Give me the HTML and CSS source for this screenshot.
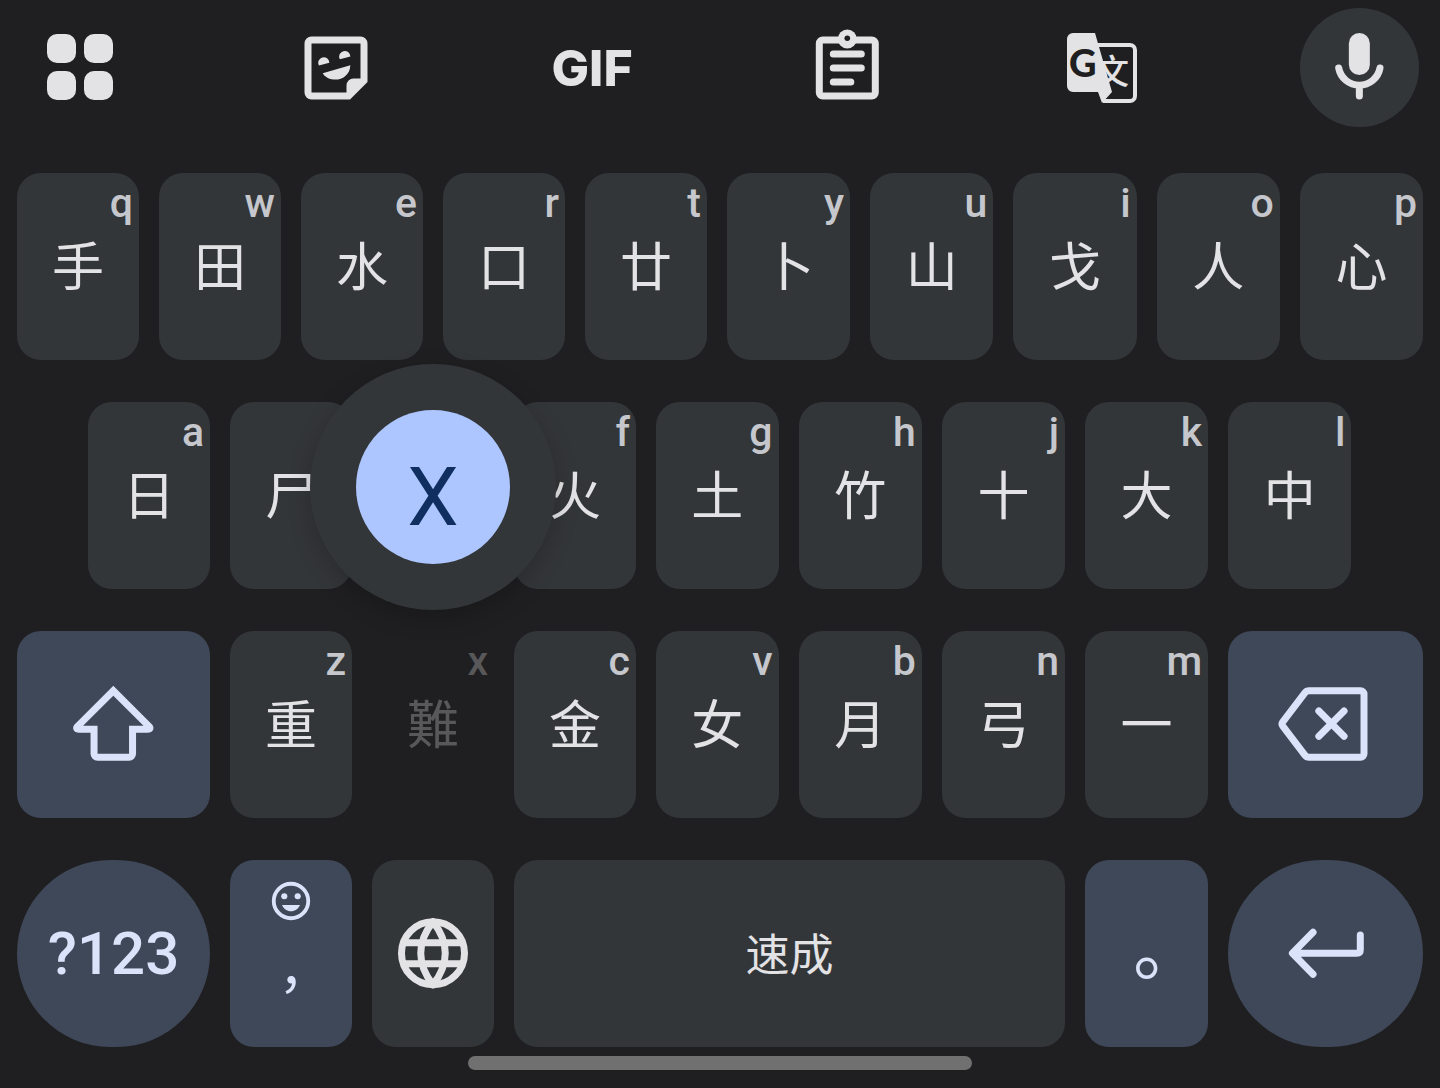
FILE: index.html
```
<!DOCTYPE html>
<html lang="zh-Hans">
<head>
    <meta charset="UTF-8">
    <meta name="viewport" content="width=device-width, initial-scale=1.0">
    <title>速成</title>
    <link rel="stylesheet" href="styles.css">
</head>
<body>

<div class="toolbar">
    <button class="tool" aria-label="Menu">
        <svg class="icon" viewBox="0 0 84 84">
            <rect x="8" y="8" width="29" height="29" rx="10"/>
            <rect x="45" y="8" width="29" height="29" rx="10"/>
            <rect x="8" y="45" width="29" height="29" rx="10"/>
            <rect x="45" y="45" width="29" height="29" rx="10"/>
        </svg>
    </button>
    <button class="tool" aria-label="Stickers">
        <svg class="icon" viewBox="0 0 24 24">
            <path fill-rule="evenodd" d="M5 3H19a2 2 0 0 1 2 2V16L16 21H5a2 2 0 0 1-2-2V5a2 2 0 0 1 2-2ZM5 5V19H15V17a2 2 0 0 1 2-2H19V5Z"/>
            <path d="M7.1 11.3a1.6 1.6 0 1 1 3-.8zM13.1 9.5a1.6 1.6 0 1 1 3-.8zM8.2 13.5L16.1 11.2C16 14 13.8 15.3 11.9 15.3 10.2 15.3 8.9 14.7 8.2 13.5Z"/>
        </svg>
    </button>
    <button class="tool gif">GIF</button>
    <button class="tool" aria-label="Clipboard">
        <svg class="icon" viewBox="0 0 24 24">
            <circle cx="11.8" cy="3.7" r="2.7"/>
            <rect class="line" x="3.8" y="4" width="16" height="16" rx="1"/>
            <circle class="hole" cx="11.8" cy="3.5" r="0.8"/>
            <path class="line" d="M7.8 8h8M7.8 12h8M7.8 16h5"/>
        </svg>
    </button>
    <button class="tool" aria-label="Translate">
        <svg class="icon" viewBox="0 0 84 84">
            <path class="frame" d="M36 19H68a5 5 0 0 1 5 5V70a5 5 0 0 1-5 5H41"/>
            <text class="han" x="33" y="58">文</text>
            <path d="M11 7H33L50 66L40 77L36 66H11a6 6 0 0 1-6-6V13a6 6 0 0 1 6-6Z"/>
            <text class="gee" x="7" y="51">G</text>
        </svg>
    </button>
    <button class="tool mic" aria-label="Voice input">
        <svg class="icon" viewBox="0 0 24 24">
            <rect x="9.100" y="2" width="6" height="12" rx="3"/>
            <path class="line" d="M6.200 12A6 6 0 0 0 18 12M12.100 17V20"/>
        </svg>
    </button>
</div>

<div class="keyboard">
    <div class="row">
        <button class="key">手<span class="hint">q</span></button>
        <button class="key">田<span class="hint">w</span></button>
        <button class="key">水<span class="hint">e</span></button>
        <button class="key">口<span class="hint">r</span></button>
        <button class="key">廿<span class="hint">t</span></button>
        <button class="key">卜<span class="hint">y</span></button>
        <button class="key">山<span class="hint">u</span></button>
        <button class="key">戈<span class="hint">i</span></button>
        <button class="key">人<span class="hint">o</span></button>
        <button class="key">心<span class="hint">p</span></button>
    </div>

    <div class="row middle">
        <button class="key">日<span class="hint">a</span></button>
        <button class="key">尸<span class="hint">s</span></button>
        <button class="key" aria-label="木"></button>
        <button class="key">火<span class="hint">f</span></button>
        <button class="key">土<span class="hint">g</span></button>
        <button class="key">竹<span class="hint">h</span></button>
        <button class="key">十<span class="hint">j</span></button>
        <button class="key">大<span class="hint">k</span></button>
        <button class="key">中<span class="hint">l</span></button>
    </div>

    <div class="row">
        <button class="key special wide action" aria-label="Shift">
            <svg class="icon" viewBox="0 0 24 24">
                <path class="line sharp" d="M11.8 2.2L1.6 12.4Q.9 13.2 2 13.2H6.3V20.2a1 1 0 0 0 1 1H16.3a1 1 0 0 0 1-1V13.2H21.6Q22.7 13.2 22 12.4Z"/>
            </svg>
        </button>
        <button class="key">重<span class="hint">z</span></button>
        <button class="key pressed">
            <span class="label">難</span><span class="hint">x</span>
            <!-- bubble with the long-press letter -->
            <span class="popup"><span class="choice">X</span></span>
        </button>
        <button class="key">金<span class="hint">c</span></button>
        <button class="key">女<span class="hint">v</span></button>
        <button class="key">月<span class="hint">b</span></button>
        <button class="key">弓<span class="hint">n</span></button>
        <button class="key">一<span class="hint">m</span></button>
        <button class="key special wide action" aria-label="Backspace">
            <svg class="icon backspace" viewBox="-2 0 27 24">
                <path class="line" d="M6.8 2.2H21.5a1 1 0 0 1 1 1V20.2a1 1 0 0 1-1 1H6.8a1.5 1.5 0 0 1-1.2-.6L-.7 12.3a1 1 0 0 1 0-1.2L5.6 2.8a1.5 1.5 0 0 1 1.2-.6zM9.6 8l7.2 7.2M16.8 8l-7.2 7.2"/>
            </svg>
        </button>
    </div>

    <div class="row">
        <button class="key special wide round symbols">?123</button>
        <button class="key special comma" lang="zh-Hant">
            <svg class="smile" viewBox="0 0 24 24">
                <circle class="line" cx="12" cy="12" r="9"/>
                <circle cx="8.5" cy="9.5" r="1.6"/>
                <circle cx="15.5" cy="9.5" r="1.6"/>
                <path d="M7.3 14.1h9.4c-.8 2-2.6 3.3-4.7 3.3s-3.9-1.3-4.7-3.3z"/>
            </svg>
            <span>，</span>
        </button>
        <button class="key action" aria-label="Language">
            <svg class="icon" viewBox="0 0 24 24">
                <circle class="line" cx="12" cy="11.8" r="9"/>
                <path class="line" d="M4 8.8H20M4 14.8H20M12 2.8C9.6 5.8 8.5 8.8 8.5 11.8s1.1 6 3.5 9M12 2.8c2.4 3 3.5 6 3.5 9s-1.1 6-3.5 9"/>
            </svg>
        </button>
        <button class="key space">速成</button>
        <button class="key special period" lang="zh-Hant">。</button>
        <button class="key special wide round action" aria-label="Enter">
            <svg class="icon" viewBox="0 0 24 24">
                <path class="line" d="M8.3 5.8L2.4 11.8l5.9 6M3 11.8H20.8q1 0 1-1V6.6"/>
            </svg>
        </button>
    </div>
</div>

<div class="home-bar"></div>

</body>
</html>
```

FILE: styles.css
```
* {
    box-sizing: border-box;
}
body {
    margin: 0;
    background-color: #1f1f21;
    color: #e3e3e5;
    font-family: Roboto, "Noto Sans CJK SC", sans-serif;
}
button {
    border: none;
    margin: 0;
    padding: 0;
    background: none;
    color: inherit;
    font: inherit;
    cursor: pointer;
}

/* icons */
.icon {
    width: 84px;
    height: 84px;
    flex: none;
    fill: currentColor;
}
.backspace {
    width: 95px;
}
.line {
    fill: none;
    stroke: currentColor;
    stroke-width: 2;
    stroke-linecap: round;
    stroke-linejoin: round;
}
.sharp {
    stroke-linejoin: miter;
}
.hole {
    fill: #1f1f21;
}
.frame {
    fill: none;
    stroke: currentColor;
    stroke-width: 4;
}
.gee {
    fill: #1f1f21;
    font-family: Lato, sans-serif;
    font-size: 38px;
    font-weight: 900;
}
.han {
    font-size: 34px;
    font-weight: 500;
}

/* toolbar */
.toolbar {
    display: flex;
    justify-content: space-between;
    padding: 8px 21px 46px;
}
.tool {
    width: 119px;
    height: 119px;
    display: flex;
    justify-content: center;
    align-items: center;
}
.gif {
    font-family: Inter, sans-serif;
    font-size: 50px;
    font-weight: 800;
}
.mic {
    border-radius: 50%;
    background-color: #333638;
}

/* keys */
.keyboard {
    display: flex;
    flex-direction: column;
    gap: 42px;
    padding: 0 17px;
}
.row {
    display: grid;
    grid-template-columns: repeat(10, 85fr) repeat(10, 86fr);
    column-gap: 20px;
}
.key {
    grid-column: span 2;
    position: relative;
    display: flex;
    justify-content: center;
    align-items: center;
    height: 187px;
    padding-top: 5px;
    border-radius: 24px;
    background-color: #333638;
    font-size: 52px;
    line-height: 60px;
}
.middle .key:first-child {
    grid-column: 2 / span 2;
}
.hint {
    position: absolute;
    top: 6px;
    right: 6px;
    color: #c5c7cc;
    font-size: 41px;
    font-weight: 500;
    line-height: 48px;
}
.special {
    background-color: #3f4859;
    color: #dbe3fa;
}
.wide {
    grid-column: span 3;
}
.action {
    padding-top: 0;
}
.round {
    border-radius: 94px;
}
.symbols {
    padding-top: 0;
    font-size: 60px;
    font-weight: 500;
}
.comma {
    flex-direction: column;
    justify-content: flex-start;
    gap: 33px;
    padding-top: 18px;
    font-family: Roboto, "Noto Sans CJK TC", sans-serif;
}
.smile {
    width: 46px;
    height: 46px;
    flex: none;
    fill: currentColor;
}
.period {
    padding-top: 34px;
    font-family: Roboto, "Noto Sans CJK TC", sans-serif;
    font-size: 70px;
}
.space {
    grid-column: span 8;
    font-size: 44px;
}

/* pressed key and its bubble */
.pressed {
    background: none;
}
.pressed .label,
.pressed .hint {
    color: #58585a;
}
.popup {
    position: absolute;
    z-index: 1;
    bottom: calc(100% + 21px);
    left: 50%;
    transform: translateX(-50%);
    display: flex;
    justify-content: center;
    align-items: center;
    width: 246px;
    height: 246px;
    border-radius: 50%;
    background-color: #333638;
    box-shadow: 0 8px 24px rgba(0, 0, 0, 0.2);
}
.choice {
    width: 154px;
    height: 154px;
    padding-top: 10px;
    border-radius: 50%;
    background-color: #adc6ff;
    color: #102f60;
    font-size: 82px;
    line-height: 154px;
    text-align: center;
}

.home-bar {
    width: 35%;
    height: 14px;
    margin: 9px auto 18px;
    border-radius: 7px;
    background-color: #707070;
}
```
